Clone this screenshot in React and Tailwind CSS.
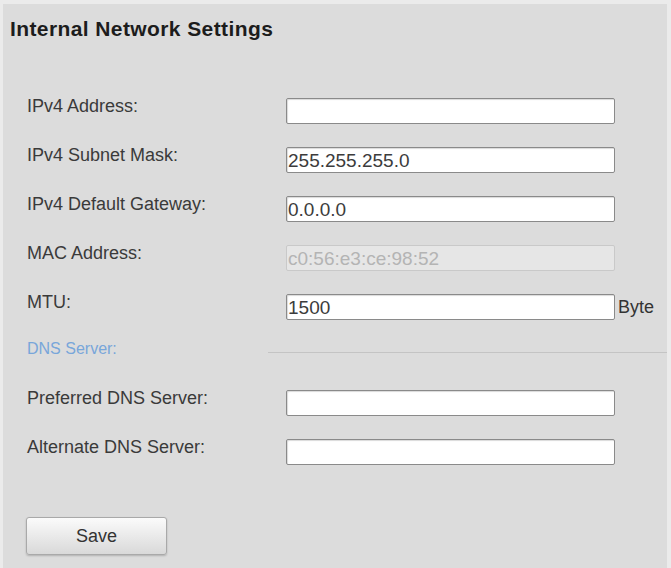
import React from 'react';

const rows = [
  { label: 'IPv4 Address:', value: '' },
  { label: 'IPv4 Subnet Mask:', value: '255.255.255.0' },
  { label: 'IPv4 Default Gateway:', value: '0.0.0.0' },
  { label: 'MAC Address:', value: 'c0:56:e3:ce:98:52', disabled: true },
  { label: 'MTU:', value: '1500', unit: 'Byte' },
];

const dnsRows = [
  { label: 'Preferred DNS Server:', value: '' },
  { label: 'Alternate DNS Server:', value: '' },
];

const Field = ({ label, value, disabled, unit }) => (
  <div className="flex items-center h-[26px]">
    <span className="w-[259px] pb-[10px] text-[18px] leading-[20px] text-[#3a3a3a]">{label}</span>
    <div
      className={`w-[329px] h-[26px] flex items-center px-[1px] rounded-[2px] border ${
        disabled
          ? 'bg-[#e6e6e6] border-[#c9c9c9] text-[#b4b4b4]'
          : 'bg-white border-[#8a8a8a] text-[#3c3c3c] shadow-[inset_1px_1px_1px_rgba(0,0,0,0.15)]'
      } text-[19px] leading-none`}
    >
      {value}
    </div>
    {unit && <span className="ml-[3px] text-[18px] leading-none text-[#333]">{unit}</span>}
  </div>
);

export default function App() {
  return (
    <div className="w-[671px] h-[568px] overflow-hidden bg-[#dcdcdc] border-t-4 border-l-[3px] border-r-4 border-[#ebebeb] font-['Liberation_Sans',Arial,sans-serif]">
      <h1 className="pt-[12px] pl-[7px] text-[21px] leading-[26px] font-bold tracking-[0.4px] text-[#1c1c1c]">
        Internal Network Settings
      </h1>

      <div className="pl-[24px] mt-[56px] flex flex-col gap-[23px]">
        {rows.map(r => <Field key={r.label} {...r} />)}
      </div>

      {/* DNS section header */}
      <div className="pl-[24px] mt-[22px] h-[20px] flex items-center">
        <span className="w-[241px] pb-[6px] text-[16px] leading-[18px] text-[#78a6da]">DNS Server:</span>
        <div className="flex-1 border-t border-[#c4c4c4]" />
      </div>

      <div className="pl-[24px] mt-[28px] flex flex-col gap-[23px]">
        {dnsRows.map(r => <Field key={r.label} {...r} />)}
      </div>

      <div className="pl-[23px] mt-[52px]">
        <button className="w-[141px] h-[38px] rounded-[3px] border border-[#a9a9a9] bg-gradient-to-b from-[#fbfbfb] to-[#d9d9d9] shadow-[0_1px_2px_rgba(0,0,0,0.2)] text-[18px] text-[#333]">
          Save
        </button>
      </div>
    </div>
  );
}
